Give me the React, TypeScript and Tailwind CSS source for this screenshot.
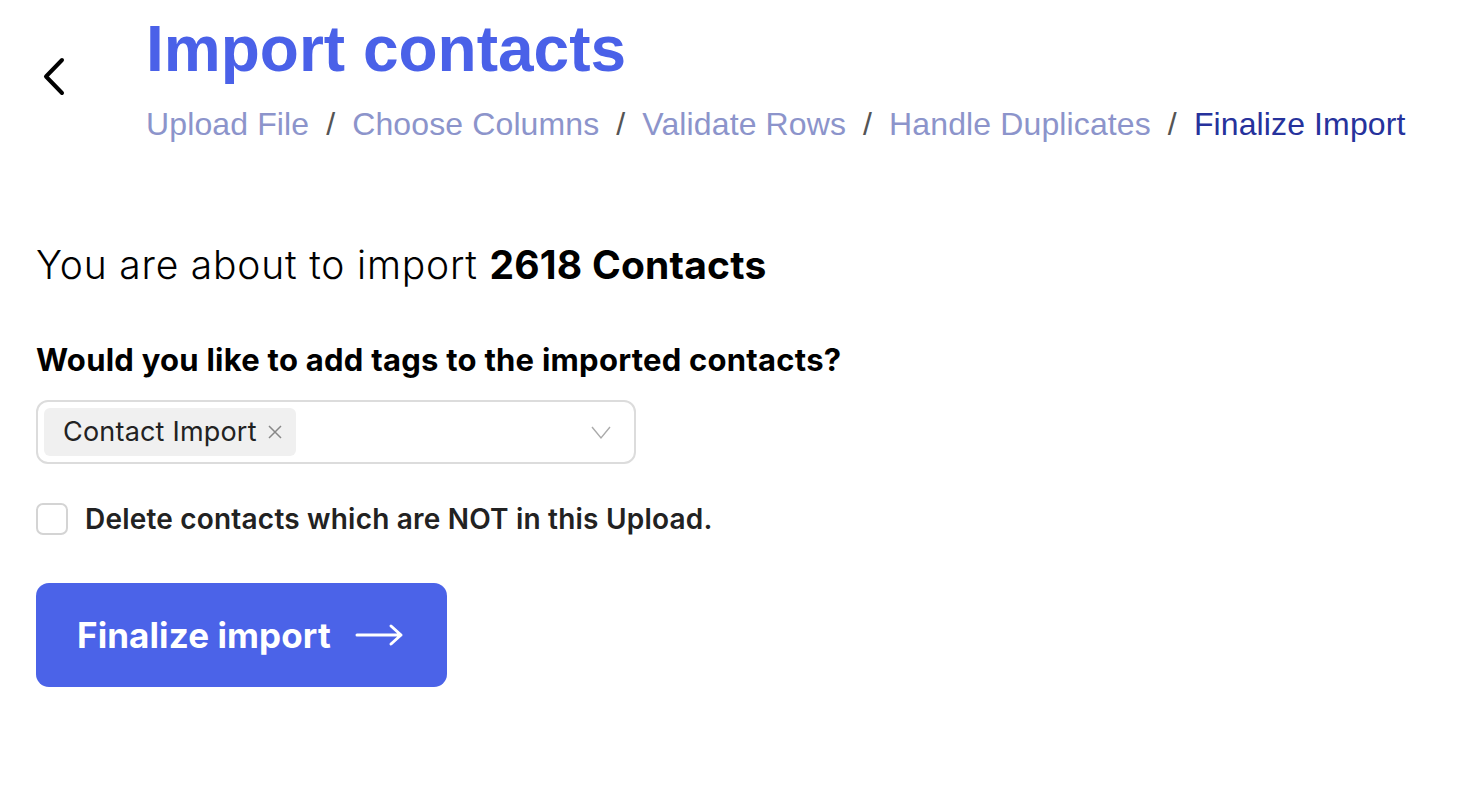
import React from "react";

export default function App() {
  const crumbs = ["Upload File", "Choose Columns", "Validate Rows", "Handle Duplicates"];
  return (
    <div className="w-[1458px] h-[800px] bg-white overflow-hidden" style={{ fontFamily: "Inter, 'Liberation Sans', sans-serif" }}>
      <div className="flex pt-[15px]">
        <div className="w-[146px] shrink-0 pl-[40px] pt-[42px]">
          <svg width="30" height="40" viewBox="0 0 30 40" fill="none">
            <path d="M22 3 L6 19.5 L22 36" stroke="#000" strokeWidth="4" strokeLinecap="round" strokeLinejoin="round" />
          </svg>
        </div>
        <div className="flex flex-col" style={{ fontFamily: "'Liberation Sans', Arial, sans-serif" }}>
          <h1 className="text-[64px] leading-[68px] font-bold text-[#4a61e8]">Import contacts</h1>
          <div className="flex items-center text-[32px] leading-[40px] mt-[21px] tracking-[0.12px]">
            {crumbs.map((c) => (
              <React.Fragment key={c}>
                <span className="text-[#8c94cb]">{c}</span>
                <span className="text-[#555] mx-[17px]">/</span>
              </React.Fragment>
            ))}
            <span className="text-[#26329c]">Finalize Import</span>
          </div>
        </div>
      </div>

      <div className="pl-[36px] mt-[97px]">
        <p className="text-[39px] leading-[48px] text-black font-light tracking-[0.8px]">
          You are about to import <span className="font-bold tracking-[0.2px]">2618 Contacts</span>
        </p>
        <p className="mt-[51px] text-[31px] leading-[40px] font-bold text-black tracking-[0.25px]">
          Would you like to add tags to the imported contacts?
        </p>
        <div className="mt-[20px] w-[600px] h-[64px] border-2 border-[#dcdcdc] rounded-[12px] flex items-center pl-[6px] pr-[22px]">
          <div className="h-[48px] bg-[#f0f0f0] rounded-[6px] flex items-center pl-[19px] pr-[13px] gap-[10px]">
            <span className="text-[27px] text-[#222] tracking-[0.2px]">Contact Import</span>
            <svg width="16" height="16" viewBox="0 0 16 16"><path d="M2 2 L14 14 M14 2 L2 14" stroke="#888" strokeWidth="1.5" /></svg>
          </div>
          <div className="flex-1" />
          <svg width="22" height="16" viewBox="0 0 22 16"><path d="M2 3 L11 14 L20 3" stroke="#aaa" strokeWidth="1.4" fill="none" /></svg>
        </div>
        <div className="mt-[35px] h-[40px] flex items-center gap-[17px]">
          <div className="w-[32px] h-[32px] rounded-[7px] border-2 border-[#d4d4d4]" />
          <span className="text-[28px] font-semibold text-[#222] tracking-[0.2px]">Delete contacts which are NOT in this Upload.</span>
        </div>
        <button className="mt-[44px] w-[411px] h-[104px] bg-[#4b63e8] rounded-[13px] flex items-center pl-[41px] gap-[24px] text-white">
          <span className="text-[35px] font-bold tracking-[0.1px]">Finalize import</span>
          <svg width="50" height="24" viewBox="0 0 50 24" fill="none"><path d="M2 12 H46 M36 3 L46 12 L36 21" stroke="#fff" strokeWidth="3" strokeLinecap="round" strokeLinejoin="round" /></svg>
        </button>
      </div>
    </div>
  );
}
